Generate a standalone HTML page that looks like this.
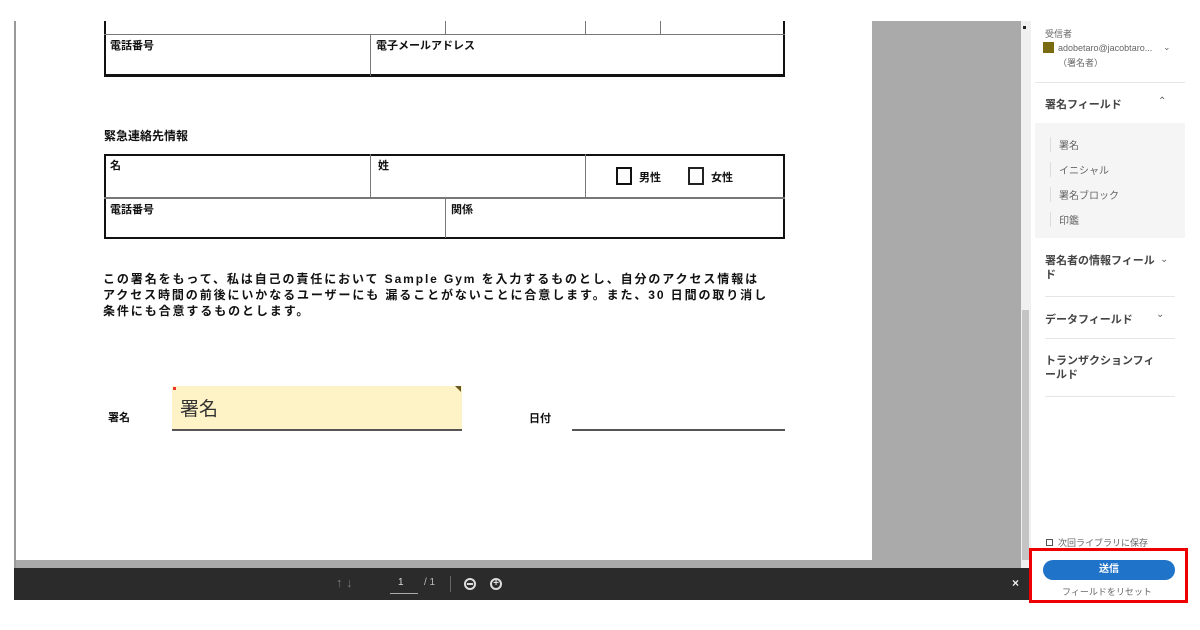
<!DOCTYPE html>
<html><head><meta charset="utf-8"><style>
*{margin:0;padding:0;box-sizing:border-box}
body{width:1200px;height:630px;background:#fff;position:relative;overflow:hidden;font-family:"Liberation Sans","Noto Sans CJK JP",sans-serif;color:#111}
.a{position:absolute}
.b{font-weight:bold;font-size:12px}
.side{font-size:10px;color:#666}
.sh{font-size:11px;color:#444;font-weight:bold}
</style></head><body>
<div class="a" style="left:14px;top:21px;width:1016px;height:548px;background:#aaa"></div>
<div class="a" style="left:14px;top:21px;width:2px;height:548px;background:#999"></div>
<div class="a" style="left:16px;top:21px;width:856px;height:539px;background:#fff"></div>
<div class="a" style="left:1021px;top:21px;width:10px;height:548px;background:#f0f0f0"></div>
<div class="a" style="left:1022px;top:310px;width:7px;height:250px;background:#c4c4c4"></div>
<div class="a" style="left:1023px;top:26px;width:3px;height:3px;background:#222"></div>

<div class="a" style="left:104px;top:21px;width:681px;height:56px;border:solid #111;border-width:0 2px 3px 2px"></div>
<div class="a" style="left:104px;top:34px;width:681px;height:1px;background:#777"></div>
<div class="a" style="left:370px;top:34px;width:1px;height:42px;background:#777"></div>
<div class="a" style="left:445px;top:21px;width:1px;height:13px;background:#777"></div>
<div class="a" style="left:585px;top:21px;width:1px;height:13px;background:#777"></div>
<div class="a" style="left:660px;top:21px;width:1px;height:13px;background:#777"></div>
<div class="a b" style="left:110px;top:37px;font-size:11px">電話番号</div>
<div class="a b" style="left:376px;top:37px;font-size:11px">電子メールアドレス</div>

<div class="a b" style="left:104px;top:127px">緊急連絡先情報</div>
<div class="a" style="left:104px;top:154px;width:681px;height:85px;border:2px solid #111"></div>
<div class="a" style="left:104px;top:197px;width:681px;height:2px;background:#777"></div>
<div class="a" style="left:370px;top:154px;width:1px;height:44px;background:#777"></div>
<div class="a" style="left:585px;top:154px;width:1px;height:44px;background:#777"></div>
<div class="a" style="left:445px;top:198px;width:1px;height:40px;background:#777"></div>
<div class="a b" style="left:110px;top:157px;font-size:11px">名</div>
<div class="a b" style="left:378px;top:157px;font-size:11px">姓</div>
<div class="a" style="left:616px;top:167px;width:16px;height:18px;border:2px solid #111"></div>
<div class="a b" style="left:639px;top:169px;font-size:11px">男性</div>
<div class="a" style="left:688px;top:167px;width:16px;height:18px;border:2px solid #222"></div>
<div class="a b" style="left:711px;top:169px;font-size:11px">女性</div>
<div class="a b" style="left:110px;top:201px;font-size:11px">電話番号</div>
<div class="a b" style="left:451px;top:201px;font-size:11px">関係</div>

<div class="a b" style="left:103px;top:271px;line-height:16px;font-size:12px;letter-spacing:1.9px;white-space:nowrap">この署名をもって、私は自己の責任において Sample Gym を入力するものとし、自分のアクセス情報は<br>アクセス時間の前後にいかなるユーザーにも 漏ることがないことに合意します。また、30 日間の取り消し<br>条件にも合意するものとします。</div>

<div class="a b" style="left:108px;top:409px;font-size:11px">署名</div>
<div class="a" style="left:172px;top:386px;width:290px;height:44px;background:#fdf3c6"></div>
<div class="a" style="left:172px;top:429px;width:290px;height:2px;background:#555"></div>
<div class="a" style="left:173px;top:387px;width:3px;height:3px;background:#e33"></div>
<div class="a" style="left:455px;top:386px;width:0;height:0;border-left:6px solid transparent;border-top:6px solid #6b5a20"></div>
<div class="a" style="left:180px;top:394px;font-size:19px;color:#333">署名</div>
<div class="a b" style="left:529px;top:410px;font-size:11px">日付</div>
<div class="a" style="left:572px;top:429px;width:213px;height:2px;background:#555"></div>

<div class="a" style="left:14px;top:568px;width:1016px;height:32px;background:#2b2b2b"></div>
<div class="a" style="left:336px;top:575px;color:#777;font-size:13px">↑ ↓</div>
<div class="a" style="left:398px;top:577px;color:#ddd;font-size:10px">1</div>
<div class="a" style="left:390px;top:593px;width:28px;height:1px;background:#aaa"></div>
<div class="a" style="left:424px;top:577px;color:#bbb;font-size:10px">/ 1</div>
<div class="a" style="left:450px;top:576px;width:1px;height:16px;background:#666"></div>
<div class="a" style="left:464px;top:578px;width:12px;height:12px;border:2px solid #ddd;border-radius:50%"></div>
<div class="a" style="left:467px;top:583px;width:6px;height:2px;background:#ddd"></div>
<div class="a" style="left:490px;top:578px;width:12px;height:12px;border:2px solid #ddd;border-radius:50%;color:#ddd;font-size:10px;line-height:8px;text-align:center;font-weight:bold">+</div>
<div class="a" style="left:1012px;top:576px;color:#eee;font-size:12px;font-weight:bold">×</div>

<div class="a side" style="left:1045px;top:27px;font-size:9px">受信者</div>
<div class="a" style="left:1043px;top:42px;width:11px;height:11px;background:#7a6a10"></div>
<div class="a side" style="left:1058px;top:43px;font-size:9px">adobetaro@jacobtaro...</div>
<div class="a side" style="left:1163px;top:42px;font-size:9px">⌄</div>
<div class="a side" style="left:1058px;top:56px;font-size:9px">（署名者）</div>
<div class="a" style="left:1035px;top:82px;width:150px;height:1px;background:#e6e6e6"></div>
<div class="a sh" style="left:1045px;top:96px">署名フィールド</div>
<div class="a side" style="left:1158px;top:96px">⌃</div>
<div class="a" style="left:1035px;top:123px;width:150px;height:115px;background:#f5f5f5"></div>
<div class="a side" style="left:1050px;top:137px;border-left:1px solid #ddd;padding-left:8px">署名</div>
<div class="a side" style="left:1050px;top:162px;border-left:1px solid #ddd;padding-left:8px">イニシャル</div>
<div class="a side" style="left:1050px;top:187px;border-left:1px solid #ddd;padding-left:8px">署名ブロック</div>
<div class="a side" style="left:1050px;top:212px;border-left:1px solid #ddd;padding-left:8px">印鑑</div>
<div class="a sh" style="left:1045px;top:254px;width:115px;line-height:14px">署名者の情報フィールド</div>
<div class="a side" style="left:1160px;top:254px">⌄</div>
<div class="a" style="left:1045px;top:296px;width:130px;height:1px;background:#e6e6e6"></div>
<div class="a sh" style="left:1045px;top:311px">データフィールド</div>
<div class="a side" style="left:1156px;top:309px">⌄</div>
<div class="a" style="left:1045px;top:338px;width:130px;height:1px;background:#e6e6e6"></div>
<div class="a sh" style="left:1045px;top:354px;width:115px;line-height:14px">トランザクションフィールド</div>
<div class="a" style="left:1045px;top:396px;width:130px;height:1px;background:#e6e6e6"></div>
<div class="a" style="left:1046px;top:539px;width:7px;height:7px;border:1px solid #555"></div>
<div class="a side" style="left:1058px;top:536px;font-size:9px">次回ライブラリに保存</div>
<div class="a" style="left:1029px;top:548px;width:159px;height:55px;border:3px solid #e00"></div>
<div class="a" style="left:1043px;top:560px;width:132px;height:20px;background:#1f73c8;border-radius:10px;color:#fff;font-size:10px;text-align:center;line-height:20px;font-weight:bold">送信</div>
<div class="a side" style="left:1062px;top:585px;font-size:9px">フィールドをリセット</div>
</body></html>
